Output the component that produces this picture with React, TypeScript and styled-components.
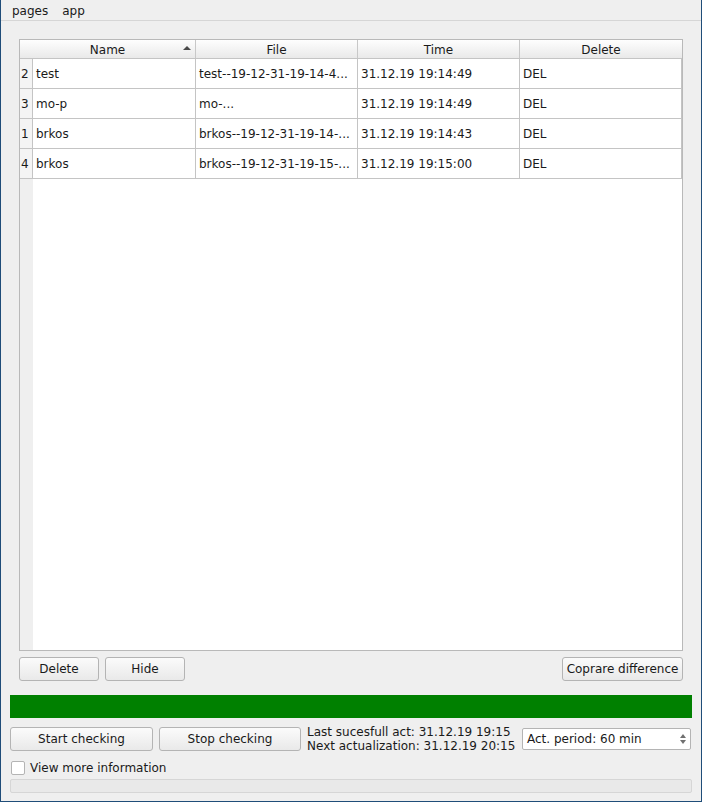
import React from "react";
import styled, { createGlobalStyle } from "styled-components";

const Global = createGlobalStyle`
  html, body { margin: 0; padding: 0; background: #efefef; }
  body { font-family: "DejaVu Sans", "Liberation Sans", sans-serif; font-size: 12px; color: #1a1a1a; }
  * { box-sizing: border-box; }
`;

const Window = styled.div`
  width: 702px;
  height: 802px;
  background: #efefef;
  border-left: 1px solid #1f4d79;
  border-right: 1px solid #1f4d79;
  border-bottom: 1px solid #1f4d79;
  display: flex;
  flex-direction: column;
`;

const MenuBar = styled.div`
  height: 21px;
  border-bottom: 1px solid #d6d6d6;
  display: flex;
  align-items: center;
  padding-left: 10px;
  gap: 12px;
`;

const MenuItem = styled.span`
  padding: 0 1px;
  line-height: 20px;
  padding-top: 1px;
`;

const Content = styled.div`
  flex: 1;
  display: flex;
  flex-direction: column;
  padding: 18px 9px 0 9px;
`;

const Group = styled.div`
  margin: 0 9px 0 9px;
  display: flex;
  flex-direction: column;
`;

const TableFrame = styled.div`
  height: 612px;
  border: 1px solid #b9b9b9;
  background: #fff;
  display: flex;
  flex-direction: column;
`;

const HeaderRow = styled.div`
  display: flex;
  height: 19px;
  border-bottom: 1px solid #c4c4c4;
  background: linear-gradient(#fefefe, #e9e9e9);
`;

const HeaderCell = styled.div<{ $w: number; $last?: boolean }>`
  width: ${(p) => p.$w}px;
  position: relative;
  text-align: center;
  line-height: 19px;
  padding-top: 1px;
  border-right: ${(p) => (p.$last ? "none" : "1px solid #c8c8c8")};
`;

const SortArrow = styled.span`
  position: absolute;
  right: 4px;
  top: 6px;
  width: 0;
  height: 0;
  border-left: 4px solid transparent;
  border-right: 4px solid transparent;
  border-bottom: 4px solid #4a4a4a;
`;

const Row = styled.div`
  display: flex;
  height: 30px;
  border-bottom: 1px solid #c4c4c4;
`;

const RowNum = styled.div`
  width: 13px;
  background: #f4f4f4;
  border-right: 1px solid #c4c4c4;
  padding-left: 1px;
  display: flex;
  align-items: center;
`;

const Cell = styled.div<{ $w: number }>`
  width: ${(p) => p.$w}px;
  border-right: 1px solid #c4c4c4;
  padding-left: 3px;
  display: flex;
  align-items: center;
  white-space: nowrap;
  overflow: hidden;
`;

const Filler = styled.div`
  flex: 1;
  display: flex;
`;

const FillerSide = styled.div`
  width: 13px;
  background: #efefef;
`;

const ButtonRow = styled.div`
  display: flex;
  gap: 6px;
  margin-top: 6px;
`;

const Spacer = styled.div`
  flex: 1;
`;

const Button = styled.button<{ $w: number }>`
  width: ${(p) => p.$w}px;
  height: 24px;
  flex: none;
  font-family: inherit;
  font-size: 12px;
  color: #1a1a1a;
  border: 1px solid #b4b4b4;
  border-radius: 3px;
  background: linear-gradient(#fbfbfb, #e9e9e9);
  padding: 0;
`;

const GreenBar = styled.div`
  height: 23px;
  background: #008000;
  margin-top: 14px;
`;

const BottomRow = styled.div`
  display: flex;
  align-items: center;
  margin-top: 7px;
  height: 28px;
  gap: 6px;
`;

const StatusText = styled.div`
  width: 209px;
  line-height: 14px;
  white-space: nowrap;
  flex: none;
`;

const SpinBox = styled.div`
  width: 169px;
  height: 22px;
  flex: none;
  background: #fff;
  border: 1px solid #b4b4b4;
  border-radius: 2px;
  display: flex;
  align-items: center;
  padding-left: 4px;
  position: relative;
`;

const SpinArrows = styled.div`
  position: absolute;
  right: 4px;
  top: 5px;
  display: flex;
  flex-direction: column;
  gap: 2px;
`;

const Tri = styled.span<{ $up?: boolean }>`
  width: 0;
  height: 0;
  border-left: 3.5px solid transparent;
  border-right: 3.5px solid transparent;
  ${(p) => (p.$up ? "border-bottom: 4px solid #707070;" : "border-top: 4px solid #707070;")}
`;

const CheckRow = styled.label`
  display: flex;
  align-items: center;
  gap: 5px;
  height: 14px;
  margin-top: 8px;
  padding-left: 1px;
`;

const CheckBox = styled.span`
  width: 14px;
  height: 14px;
  background: #fff;
  border: 1px solid #b4b4b4;
  border-radius: 2px;
`;

const Progress = styled.div`
  height: 14px;
  margin-top: 4px;
  border: 1px solid #d6d6d6;
  border-radius: 2px;
  background: #e9e9e9;
`;

const rows = [
  { n: "2", name: "test", file: "test--19-12-31-19-14-4...", time: "31.12.19 19:14:49" },
  { n: "3", name: "mo-p", file: "mo-...", time: "31.12.19 19:14:49" },
  { n: "1", name: "brkos", file: "brkos--19-12-31-19-14-...", time: "31.12.19 19:14:43" },
  { n: "4", name: "brkos", file: "brkos--19-12-31-19-15-...", time: "31.12.19 19:15:00" },
];

export default function App() {
  return (
    <>
      <Global />
      <Window>
        <MenuBar>
          <MenuItem>pages</MenuItem>
          <MenuItem>app</MenuItem>
        </MenuBar>
        <Content>
          <Group>
            <TableFrame>
              <HeaderRow>
                <HeaderCell $w={176}>
                  Name
                  <SortArrow />
                </HeaderCell>
                <HeaderCell $w={162}>File</HeaderCell>
                <HeaderCell $w={162}>Time</HeaderCell>
                <HeaderCell $w={162} $last>Delete</HeaderCell>
              </HeaderRow>
              {rows.map((r, i) => (
                <Row key={i}>
                  <RowNum>{r.n}</RowNum>
                  <Cell $w={163}>{r.name}</Cell>
                  <Cell $w={162}>{r.file}</Cell>
                  <Cell $w={162}>{r.time}</Cell>
                  <Cell $w={162}>DEL</Cell>
                </Row>
              ))}
              <Filler>
                <FillerSide />
              </Filler>
            </TableFrame>
            <ButtonRow>
              <Button $w={80}>Delete</Button>
              <Button $w={80}>Hide</Button>
              <Spacer />
              <Button $w={121}>Coprare difference</Button>
            </ButtonRow>
          </Group>
          <GreenBar />
          <BottomRow>
            <Button $w={143}>Start checking</Button>
            <Button $w={142}>Stop checking</Button>
            <StatusText>
              Last sucesfull act: 31.12.19 19:15
              <br />
              Next actualization: 31.12.19 20:15
            </StatusText>
            <SpinBox>
              Act. period: 60 min
              <SpinArrows>
                <Tri $up />
                <Tri />
              </SpinArrows>
            </SpinBox>
          </BottomRow>
          <CheckRow>
            <CheckBox />
            View more information
          </CheckRow>
          <Progress />
        </Content>
      </Window>
    </>
  );
}
